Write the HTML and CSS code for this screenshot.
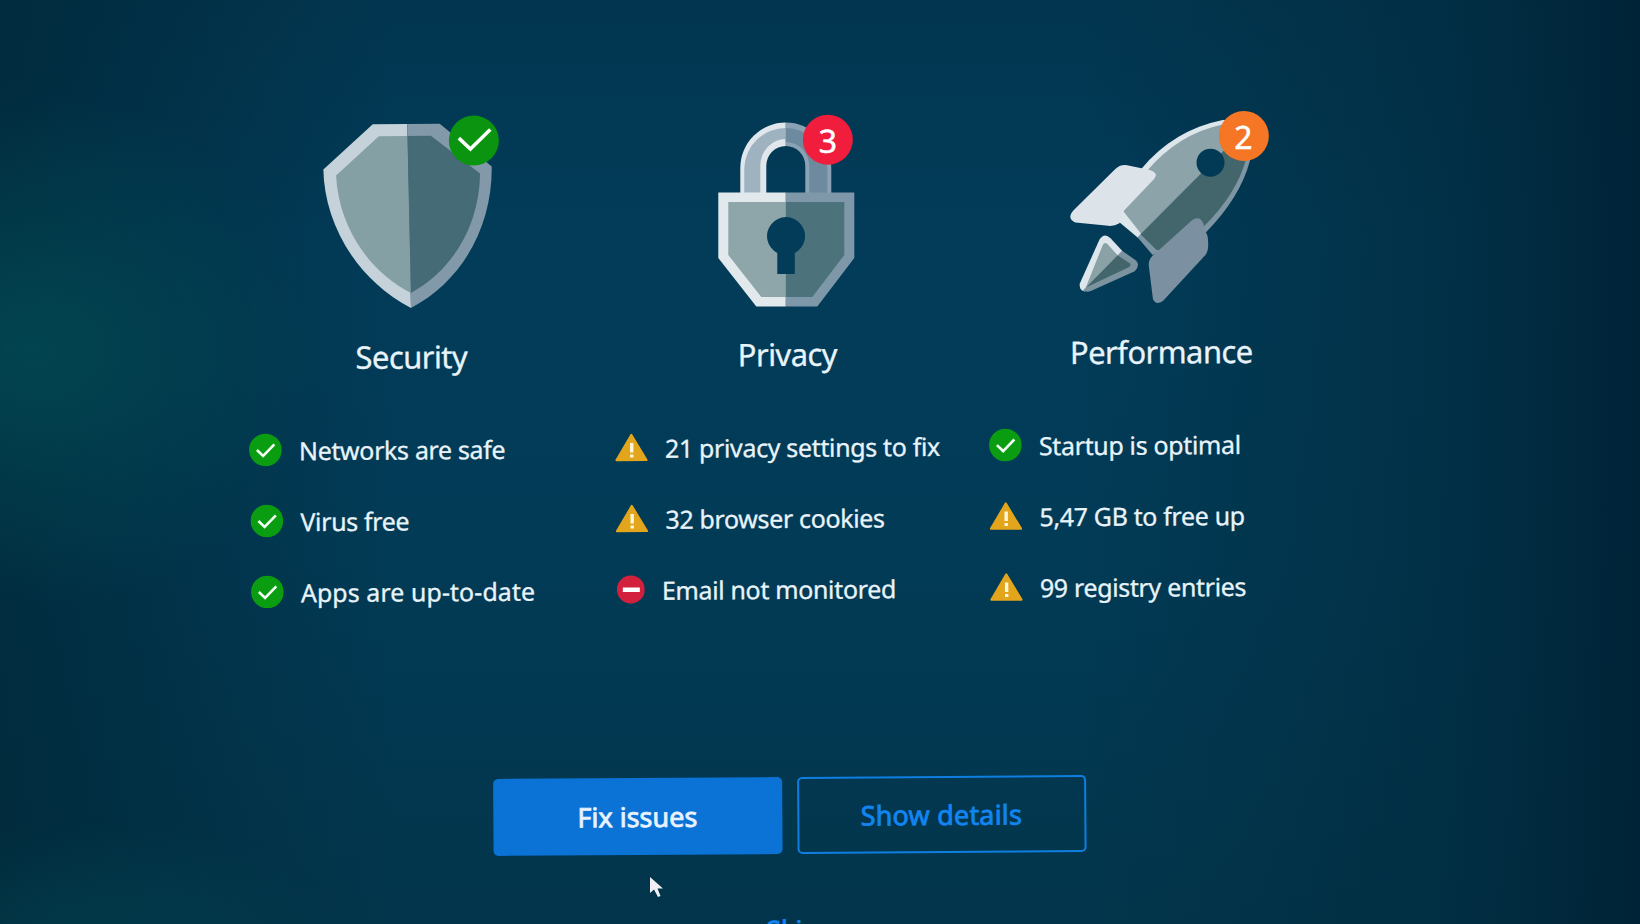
FILE: index.html
```html
<!DOCTYPE html>
<html lang="en">
<head>
    <meta charset="UTF-8">
    <meta name="viewport" content="width=device-width, initial-scale=1.0">
    <title>Scan results</title>
    <link rel="stylesheet" href="styles.css">
</head>
<body>
    <!-- shared status icons -->
    <svg class="sprite">
        <symbol id="ok" viewBox="0 0 33 33">
            <circle cx="16.5" cy="16.5" r="16.3" fill="#0a9d12" />
            <path d="M8 16.5l6.2 6L25.5 11" fill="none" stroke="#f2fff2" stroke-width="2.6" />
        </symbol>
        <symbol id="warn" viewBox="0 0 33 29">
            <path d="M16.5 1.8L31.6 27.2H1.4z" fill="#e2a51c" stroke="#e2a51c" stroke-width="2" stroke-linejoin="round" />
            <path d="M16.8 10v9.5M16.8 21.5v3" stroke="#fff7d8" stroke-width="3.4" />
        </symbol>
        <symbol id="stop" viewBox="0 0 28 29">
            <circle cx="14" cy="14.5" r="14" fill="#d3203c" />
            <rect x="6" y="12.5" width="17" height="4.5" fill="#fff" />
        </symbol>
    </svg>

    <main class="dashboard">
        <div class="columns">
            <section class="column security">
                <div class="hero">
                    <svg class="art" viewBox="0 2.5 220 210">
                        <path d="M107.5 24H73L23.3 69C24 122 54 178 110 208z" fill="#c6d2da" />
                        <path d="M107.5 24H140L191.7 67C192 124 164 180 110 208z" fill="#8299a9" />
                        <path d="M107.5 36H79L36 75C38 124 66 170 110 193z" fill="#84a0a5" />
                        <path d="M107.5 36H131L180 74C179 124 154 169 110 193z" fill="#456b76" />
                        <circle cx="174" cy="41" r="25" fill="#0a9410" />
                        <path d="M159 38.5l11.5 11L190.5 30" fill="none" stroke="#fff" stroke-width="3.6" />
                    </svg>
                    <h2>Security</h2>
                </div>
                <ul>
                    <li><svg class="icon"><use href="#ok" /></svg><span>Networks are safe</span></li>
                    <li><svg class="icon"><use href="#ok" /></svg><span>Virus free</span></li>
                    <li class="wide"><svg class="icon"><use href="#ok" /></svg><span>Apps are up-to-date</span></li>
                </ul>
            </section>

            <section class="column privacy">
                <div class="hero">
                    <svg class="art" viewBox="0 0 192 210">
                        <!-- shackle -->
                        <path d="M50 93V68A45.5 45.5 0 0 1 95.5 22.5V46A19.5 20 0 0 0 76 66V93z" fill="#dfe7ec" />
                        <path d="M54 93V68A41.5 41.5 0 0 1 95.5 28V39A25 27 0 0 0 70 66V93z" fill="#9fb2bf" />
                        <path d="M141 93V68A45.5 45.5 0 0 0 95.5 22.5V46A19.5 20 0 0 1 115 66V93z" fill="#8aa2b4" />
                        <path d="M137 93V68A41.5 41.5 0 0 0 95.5 28V42A23 25 0 0 1 119 66V93z" fill="#6d8a9f" />
                        <!-- body -->
                        <path d="M95.5 92.5H28V158L66 206.5H95.5z" fill="#e1e9ed" />
                        <path d="M95.5 92.5H164V158L127 206.5H95.5z" fill="#7e98a9" />
                        <path d="M95.5 102H38V155L71 197H95.5z" fill="#8ea5aa" />
                        <path d="M95.5 102H154V155L122 197H95.5z" fill="#4c727b" />
                        <path d="M87 153A19 19 0 1 1 104.5 153V174H87z" fill="#023c59" />
                    </svg>
                    <span class="badge red">3</span>
                    <h2>Privacy</h2>
                </div>
                <ul>
                    <li><svg class="icon"><use href="#warn" /></svg><span>21 privacy settings to fix</span></li>
                    <li><svg class="icon"><use href="#warn" /></svg><span>32 browser cookies</span></li>
                    <li><svg class="icon small"><use href="#stop" /></svg><span>Email not monitored</span></li>
                </ul>
            </section>

            <section class="column performance">
                <div class="hero">
                    <svg class="art" viewBox="0 -2.5 220 210">
                        <!-- body -->
                        <path d="M69 122L88 138L202 22Q190 20 173 20.5Q124 30 91 69L66 110z" fill="#dde6ea" />
                        <path d="M87 137L102 155L155 133Q190 98 200 61L202 22z" fill="#7e96a4" />
                        <path d="M73 111L91 134L200 25Q186 24 173 25Q128 34 96 72z" fill="#8ba3a9" />
                        <path d="M90 134L106 150L113 150L153 127Q186 95 196 60L200 25z" fill="#42666c" />
                        <circle cx="160.5" cy="63" r="14" fill="#023a56" />
                        <!-- fins -->
                        <path d="M65 69Q70 64 77 65L100 70Q109 73 104 79L73 111Q72 117 69 123Q64 126 58 125.5L25 122Q16 118 23 110z" fill="#dce4ea" />
                        <path d="M104 154L141 121Q149 115 153 124Q154 130 157 136Q159 150 155 155L112 201Q105 206 102 199L98 165Q98 158 104 154z" fill="#7b90a1" />
                        <!-- flame -->
                        <path d="M72 151L60 138Q54 132 49 139L29 183Q28 190 34 191z" fill="#dde6ea" />
                        <path d="M71.500 150.500L85 160Q90 165 84 171L40 190.500Q36 192 32 190z" fill="#7b929f" />
                        <path d="M67 155L57 144Q54 141 52 145L35 187z" fill="#8aa1a6" />
                        <path d="M67 155L79 163Q81 165 78 167L35 187z" fill="#42666c" />
                    </svg>
                    <span class="badge orange">2</span>
                    <h2>Performance</h2>
                </div>
                <ul>
                    <li><svg class="icon"><use href="#ok" /></svg><span>Startup is optimal</span></li>
                    <li><svg class="icon"><use href="#warn" /></svg><span>5,47 GB to free up</span></li>
                    <li><svg class="icon"><use href="#warn" /></svg><span>99 registry entries</span></li>
                </ul>
            </section>
        </div>

        <div class="actions">
            <button class="btn primary">Fix issues</button>
            <button class="btn outline">Show details</button>
        </div>
        <a class="skip">Skip</a>
    </main>

    <svg class="cursor" viewBox="0 0 15 22">
        <path d="M1 1V17L5 13.5L9 21L11.5 20L8.5 12.5H14z" fill="#f1eef4" />
    </svg>
</body>
</html>
```
FILE: styles.css
```css
* {
    padding: 0;
    margin: 0;
    box-sizing: border-box;
}
body {
    height: 924px;
    overflow: hidden;
    position: relative;
    color: #e8f4fa;
    font-family: "Noto Sans", "Open Sans", sans-serif;
    background:
        radial-gradient(ellipse 300px 260px at 30px 350px, rgba(2, 76, 84, 0.75), transparent),
        radial-gradient(ellipse 260px 120px at 90px 940px, rgba(2, 72, 84, 0.5), transparent),
        linear-gradient(90deg, rgba(0, 38, 54, 0.7), transparent 24%, transparent 66%, rgba(1, 44, 64, 0.7) 88%, rgba(0, 34, 54, 0.95)),
        linear-gradient(#023650, #023c59 25%, #023b56 60%, #02354b);
}
.sprite {
    position: absolute;
    width: 0;
    height: 0;
}
/* the whole panel leans a little to the left */
.dashboard {
    height: 960px;
    padding-top: 100px;
    transform: rotate(-0.38deg);
    transform-origin: 785px 462px;
}
.columns {
    display: grid;
    grid-template-columns: 366px 374px 360px;
    padding-left: 249px;
}
.hero {
    position: relative;
    width: 220px;
    height: 311px;
}
.security .hero {
    margin-left: 53px;
}
.privacy .hero {
    width: 192px;
    margin-left: 77px;
}
.performance .hero {
    margin-left: 63px;
}
.art {
    display: block;
    width: 100%;
    height: 210px;
}
.privacy .art {
    transform: rotate(0.38deg);
}
h2 {
    margin-top: 22px;
    font-size: 31px;
    line-height: 44px;
    font-weight: 400;
    letter-spacing: -0.6px;
    text-align: center;
    white-space: nowrap;
    -webkit-text-stroke: 0.3px;
}
.badge {
    position: absolute;
    width: 50px;
    height: 50px;
    border-radius: 50%;
    font-size: 32px;
    line-height: 51px;
    text-align: center;
    color: #fff;
    -webkit-text-stroke: 0.5px;
}
.red {
    left: 113px;
    top: 14.5px;
    background: #f01d3c;
}
.orange {
    left: 168.5px;
    top: 13.5px;
    background: #f57624;
}
ul {
    list-style: none;
}
li {
    display: flex;
    align-items: center;
    gap: 17px;
    height: 71px;
    font-size: 25px;
    letter-spacing: -0.35px;
    white-space: nowrap;
    -webkit-text-stroke: 0.3px;
}
.security li + li {
    padding-left: 1px;
}
.wide {
    letter-spacing: 0.05px;
}
.icon {
    width: 33px;
    height: 33px;
}
.small {
    width: 28px;
    margin-left: 1px;
}
.actions {
    display: flex;
    gap: 15px;
    margin-top: 152.5px;
    padding-left: 490.5px;
}
.btn {
    width: 289px;
    height: 77px;
    border: 2px solid #0e7fe0;
    border-radius: 5px;
    font-family: inherit;
    font-size: 27px;
    -webkit-text-stroke: 0.8px;
}
.primary {
    background: #0b73d6;
    border-color: #0b73d6;
    color: #e8f2ff;
}
.outline {
    background: transparent;
    color: #1285f0;
    letter-spacing: 0.2px;
}
.skip {
    display: block;
    margin-top: 57px;
    padding-left: 763px;
    font-size: 27px;
    color: #1285f0;
    -webkit-text-stroke: 0.8px;
}
.cursor {
    position: absolute;
    left: 649px;
    top: 876px;
    width: 15px;
    height: 22px;
}
```
